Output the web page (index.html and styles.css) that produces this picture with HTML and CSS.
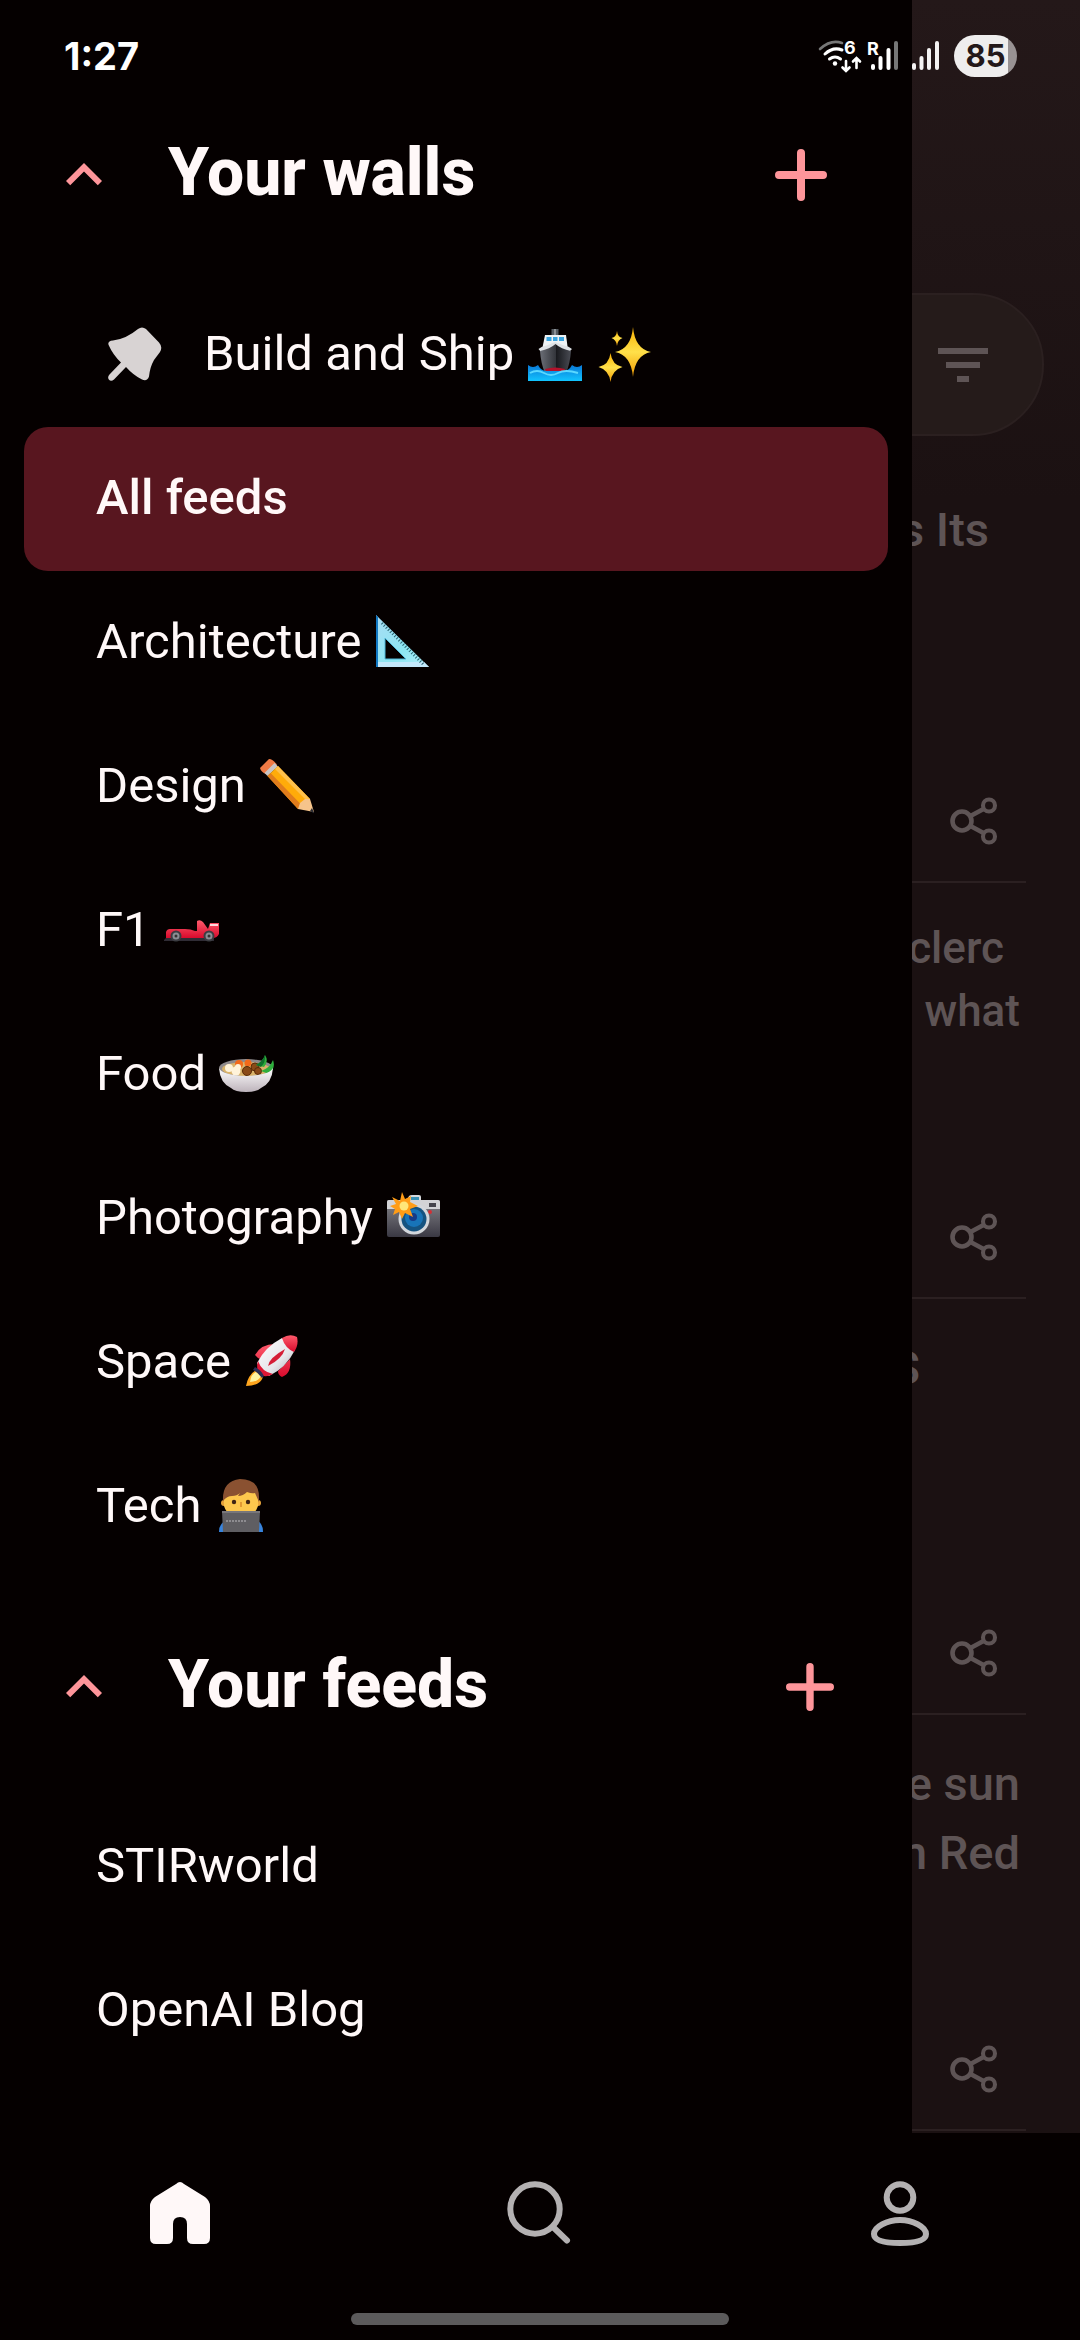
FILE: index.html
```html
<!DOCTYPE html>
<html lang="en">
<head>
<meta charset="utf-8">
<meta name="viewport" content="width=device-width, initial-scale=1">
<title>Your walls</title>
<link rel="stylesheet" href="styles.css">
</head>
<body>
<svg class="defs" aria-hidden="true">
  <defs>
    <linearGradient id="gold" x1="0" y1="0" x2="0" y2="1"><stop offset="0" stop-color="#f9b000"/><stop offset=".5" stop-color="#ffe04a"/><stop offset="1" stop-color="#f29a00"/></linearGradient>
    <linearGradient id="steel" x1="0" y1="0" x2="1" y2="0"><stop offset="0" stop-color="#6b6e76"/><stop offset=".5" stop-color="#34363c"/><stop offset=".51" stop-color="#17181c"/><stop offset="1" stop-color="#4a4c54"/></linearGradient>
    <linearGradient id="sea" x1="0" y1="0" x2="0" y2="1"><stop offset="0" stop-color="#0a78d6"/><stop offset="1" stop-color="#12c4ff"/></linearGradient>
    <linearGradient id="glass" x1="0" y1="0" x2="1" y2="1"><stop offset="0" stop-color="#a9dcf4"/><stop offset=".6" stop-color="#8ce6f2"/><stop offset="1" stop-color="#b4ecf8"/></linearGradient>
    <linearGradient id="body" x1="0" y1="0" x2="0" y2="1"><stop offset="0" stop-color="#85858a"/><stop offset="1" stop-color="#3a3843"/></linearGradient>
    <linearGradient id="bowl" x1="0" y1="0" x2="0" y2="1"><stop offset="0" stop-color="#fff"/><stop offset="1" stop-color="#bdb3bb"/></linearGradient>
    <linearGradient id="hull" x1="0" y1="0" x2="1" y2="1"><stop offset="0" stop-color="#fff"/><stop offset=".6" stop-color="#e6e6ea"/><stop offset="1" stop-color="#a9a9b0"/></linearGradient>
    <linearGradient id="red" x1="0" y1="0" x2="0" y2="1"><stop offset="0" stop-color="#ff5b6c"/><stop offset="1" stop-color="#d80a2c"/></linearGradient>
    <symbol id="chevron" viewBox="0 0 24 24"><path d="M12 8l-6 6 1.41 1.41L12 10.83l4.59 4.58L18 14z" fill="currentColor"/></symbol>
    <symbol id="plus" viewBox="0 0 52 52"><path d="M26 4v44M4 26h44" stroke="currentColor" stroke-width="8" stroke-linecap="round"/></symbol>
    <symbol id="share" viewBox="0 0 48 48"><g fill="none" stroke="currentColor"><circle cx="12" cy="24" r="9.5" stroke-width="4.6"/><circle cx="39" cy="8.5" r="6" stroke-width="4.1"/><circle cx="39" cy="39.5" r="6" stroke-width="4.1"/><path d="M20.5 19l13-7M20.5 29l13 7" stroke-width="4.6"/></g></symbol>
  </defs>
</svg>

<div class="app">
  <header class="status">
    <span class="clock">1:27</span>
    <div class="signals">
      <svg class="network" viewBox="818 35 122 42" aria-label="Wi-Fi 6, roaming signal, full signal">
        <g fill="none" stroke="#fff" stroke-width="3" stroke-linecap="round">
          <path d="M820 49q11-10 22-6" stroke="#777" stroke-width="2.6"/>
          <path d="M825 54q8-7.500 17-4"/><path d="M829.500 59q5.500-4 11 0"/>
          <path d="M846 61v9M842.500 67.500l3.500 3.500 3.500-3.500M856.500 68v-9M853 61.500l3.500-3.500 3.500 3.500" stroke-width="2.600"/>
        </g>
        <circle cx="835" cy="63.500" r="2.200" fill="#fff"/>
        <text class="tiny" x="844" y="54">6</text>
        <text class="tiny" x="867" y="55">R</text>
        <g fill="none" stroke="#fff" stroke-width="4" stroke-linecap="round">
          <path d="M873 66v2M880.500 58v10M888.500 50v18"/><path d="M896 43v25" stroke="#777"/>
          <path d="M914 65v3M921.500 58v10M929 50v18M937 43v25" stroke="#f4f3f3"/>
        </g>
      </svg>
      <span class="battery">85</span>
    </div>
  </header>

  <aside class="drawer">
    <section>
      <header class="section-head">
        <button class="icon-btn toggle" aria-label="Collapse walls"><svg class="chevron"><use href="#chevron"/></svg></button>
        <h2>Your walls</h2>
        <button class="icon-btn add" aria-label="Add wall"><svg class="plus"><use href="#plus"/></svg></button>
      </header>
      <nav class="list">
        <a href="#build" class="row pinned">
          <svg class="pin" viewBox="0 0 54 54" aria-hidden="true"><path d="M30 2Q34-1 38 2L51 15.500Q55 20 52 25L46 33Q42 40 41 49.500Q39 55 34 52.500Q25 48 18 40L6 52.500Q3 55 .8 52.500Q-.8 50 1.500 47.500L13 35.500Q5 28 .6 18Q-.8 14 5 13.500Q18 12 30 2Z" fill="#d8d3d3"/></svg>
          <span>Build and Ship</span>
          <svg class="emoji" viewBox="0 0 56 56" role="img" aria-label="ship">
            <path d="M25.500 3h7v7h-7z" fill="#555a60"/><path d="M28 3h2v7h-2z" fill="#8c9095"/>
            <path d="M19 9h21l2 15H16z" fill="#eef2f4"/><path d="M20.500 11h5v4h-5zM27 11h4.500v4H27zM33 11h5v4h-5z" fill="#3aa4df"/>
            <path d="M12.500 23q3-3 8-3.500L29 16l9 3.500q5 .5 8 3.500l-3 3H15z" fill="#dde1e5"/>
            <path d="M14 25q10-2 15.500-7Q35 23 45 25q-1 13-5 22H19q-4-9-5-22z" fill="url(#steel)"/>
            <path d="M19 43q10-3 20 0l-2 5H21z" fill="#b4122b"/>
            <path d="M2 39q5 4 10 0 3 6 9 6h16q6 0 9-6 5 4 10 0v16H2z" fill="url(#sea)"/>
            <path d="M4 47q7-4 14 0t14 0 20 0" fill="none" stroke="#5ad8ff" stroke-width="2"/>
          </svg>
          <svg class="emoji" viewBox="0 0 56 56" role="img" aria-label="sparkles" fill="url(#gold)">
            <path d="M36 1q2 22 18 25-16 3-18 25-2-22-18-25Q34 23 36 1z"/>
            <path d="M13.500 27q1.500 12 12 14-10.500 3-12 15-1.500-12-12-15 10.500-2 12-14z"/>
            <path d="M20 5q.5 6 5.500 7-5 2-5.500 8-.5-6-5.500-8 5-1 5.500-7z"/>
          </svg>
        </a>
        <a href="#all" class="row active" aria-current="page"><span>All feeds</span></a>
        <a href="#architecture" class="row"><span>Architecture</span>
          <svg class="emoji" viewBox="0 0 56 56" role="img" aria-label="triangular ruler">
            <path d="M2 1l53 52H2zM11 24v21h21z" fill="url(#glass)" fill-rule="evenodd"/>
            <path d="M2 1l2 2v50H2z" fill="#1279c4"/><path d="M4 48h46l5 5H4z" fill="#c4e8fb"/><path d="M11 24v21h21z" fill="none" stroke="#4fb7d8" stroke-width="1"/>
            <path d="M8 9l42 42" stroke="#27606e" stroke-width="3" stroke-dasharray="1 2"/>
          </svg></a>
        <a href="#design" class="row"><span>Design</span>
          <svg class="emoji" viewBox="0 0 56 56" role="img" aria-label="pencil">
            <path d="M2 10l9-9q4 0 8 6L8 16q-5-2-6-6z" fill="#f07a45"/><path d="M6.500 15l10-10 3.500 3.500L9.500 18z" fill="#c9c4c4"/>
            <path d="M9.500 18L20 8l32 33-12 10z" fill="#ffab0a"/><path d="M9.500 18l3-3 32 33-4.500 3z" fill="#e07c1c"/><path d="M17 11l3-3 32 33-3 2z" fill="#ffc04b"/>
            <path d="M40 51l2-6 5-4 5 0 4 13z" fill="#f6c48b"/><path d="M52 53l2-3 2.500 5.500z" fill="#2c2c34"/>
          </svg></a>
        <a href="#f1" class="row"><span>F1</span>
          <svg class="emoji" viewBox="0 0 56 56" role="img" aria-label="racing car">
            <path d="M1 38l4-4 46 2v3H1z" fill="#302c35"/>
            <path d="M3 30q1-3 4-3h15q6 0 10 2h2V19q3-2 6 1l5 7q1-3 2-6h9v11q-2 4-6 4H30L3 36z" fill="url(#red)"/><path d="M47 22h8v2h-8z" fill="#ffd9dd"/>
            <g fill="#8b8d93" stroke="#3c3d42" stroke-width="2"><circle cx="13" cy="34" r="4.500"/><circle cx="46" cy="34" r="4.500"/></g><g fill="#333"><circle cx="13" cy="34" r="1.500"/><circle cx="46" cy="34" r="1.500"/></g>
          </svg></a>
        <a href="#food" class="row"><span>Food</span>
          <svg class="emoji" viewBox="0 0 56 56" role="img" aria-label="bowl with food">
            <ellipse cx="28" cy="22" rx="27" ry="9" fill="#8f8a8c"/><ellipse cx="28" cy="23" rx="24" ry="7" fill="#d9b36a"/>
            <g fill="#f26a1b"><circle cx="21" cy="18" r="4"/><circle cx="30" cy="17" r="3.500"/></g>
            <g fill="#fff3da"><circle cx="11" cy="22" r="4"/><circle cx="18" cy="25" r="4.500"/><circle cx="20" cy="21" r="3"/></g>
            <g fill="#8a4a17" stroke="#5a2b0a" stroke-width="1"><circle cx="29" cy="25" r="4.500"/><circle cx="37" cy="21" r="4"/><circle cx="40" cy="25" r="3.500"/></g>
            <path d="M38 19q7-4 9-10 4 6-1 12zM43 25q9-3 12-11 3 8-4 14z" fill="#2fae3c"/><path d="M38 19q7-4 9-10 1 7-4 12z" fill="#10702c"/>
            <path d="M1 22q3 7 27 8 24-1 27-8-1 15-12 20-4 4-15 4t-15-4Q2 37 1 22z" fill="url(#bowl)"/>
          </svg></a>
        <a href="#photography" class="row"><span>Photography</span>
          <svg class="emoji" viewBox="0 0 56 56" role="img" aria-label="camera with flash">
            <path d="M21 12l3-6q1-1 3-1h7q2 0 2 2v5z" fill="#d7d9dc"/><path d="M26 7h8v4h-8z" fill="#3990b5"/>
            <rect x="2" y="10" width="53" height="37" rx="2" fill="url(#body)"/><path d="M2 19v-7q0-2 2-2h49q2 0 2 2v7z" fill="#d2d3d6"/>
            <path d="M44 13h7v4h-7z" fill="#45454d"/><circle cx="45" cy="22" r="2" fill="#d42f35"/>
            <circle cx="29" cy="29" r="15.500" fill="#d3d7dc"/><circle cx="29" cy="29" r="12.500" fill="#155380"/><circle cx="29" cy="28" r="9" fill="#1874b8"/><circle cx="28" cy="27" r="4" fill="#173a87"/>
            <path d="M17 2l3 7 6-3-1 6 8 4-8 3 3 8-8-4-3 6-3-7-6 3 2-6-5-3 6-2-4-7 8 4z" fill="#ff9c16"/><circle cx="19" cy="16" r="4.500" fill="#ffe679"/>
          </svg></a>
        <a href="#space" class="row"><span>Space</span>
          <svg class="emoji" viewBox="0 0 56 56" role="img" aria-label="rocket">
            <path d="M3 52q2-11 10-16l7 7q-3 9-17 9z" fill="#ffa51e"/><path d="M7 48q1-8 6-10l5 4q-3 6-11 6z" fill="#fff3a0"/>
            <path d="M12 21q6-11 20-11L19 26q-4-1-7-5zM47 25q2 14-8 18-4-2-4-6z" fill="url(#red)"/>
            <path d="M14 29Q22 13 39 4l13 12Q43 34 26 42q-9-4-12-13z" fill="url(#hull)"/>
            <path d="M39 4q8-5 15-1 2 8-3 15-9-4-12-14z" fill="url(#red)"/><path d="M15 27q4 11 15 13-7 4-12 1-6-5-3-14z" fill="#df1736"/>
            <path d="M12 33q6 3 9 9l-2 2q-4-6-9-8z" fill="#2b2e56"/><path d="M25 32q1-8 17-17-3 10-17 17z" fill="#d51d36"/>
          </svg></a>
        <a href="#tech" class="row"><span>Tech</span>
          <svg class="emoji" viewBox="0 0 56 56" role="img" aria-label="technologist">
            <path d="M5 54q0-8 6-11h33q5 3 5 11z" fill="#3884dd"/>
            <circle cx="10" cy="25" r="3" fill="#e6a23a"/><circle cx="44" cy="25" r="3" fill="#e6a23a"/>
            <path d="M10 14h34v14q-4 12-17 12T10 28z" fill="#fdc74d"/>
            <path d="M9 23Q8 3 26 1q19 0 19 18v5l-4-9q-3 1-8-1-4 4-9 4l2-3q-3 3-8 3-5 0-9 5z" fill="#8a5131"/>
            <circle cx="20" cy="24" r="2.200" fill="#402414"/><circle cx="34" cy="24" r="2.200" fill="#402414"/><path d="M27 24v5" stroke="#d88a2b" stroke-width="1.500"/>
            <path d="M8 33h38l-1 21H9z" fill="#5f5e62"/><path d="M8 33h38v2H8z" fill="#77767a"/><path d="M12 43h21" stroke="#8d8c90" stroke-width="2" stroke-dasharray="2 1"/>
          </svg></a>
      </nav>
    </section>
    <section>
      <header class="section-head">
        <button class="icon-btn toggle" aria-label="Collapse feeds"><svg class="chevron"><use href="#chevron"/></svg></button>
        <h2>Your feeds</h2>
        <button class="icon-btn add compact" aria-label="Add feed"><svg class="plus"><use href="#plus"/></svg></button>
      </header>
      <nav class="list">
        <a href="#stirworld" class="row"><span>STIRworld</span></a>
        <a href="#openai" class="row"><span>OpenAI Blog</span></a>
      </nav>
    </section>
  </aside>

  <main class="feed">
    <div class="searchbar">
      <button class="icon-btn" aria-label="Filter"><svg class="filter" viewBox="0 0 50 34"><path d="M0 0h50v6H0zM8 14h34v6H8zM19 28h12v6H19z" fill="currentColor"/></svg></button>
    </div>
    <article class="card lead">
      <h3><span class="line end-m">s Its</span></h3>
      <button class="icon-btn" aria-label="Share"><svg class="share"><use href="#share"/></svg></button>
    </article>
    <article class="card small">
      <h3><span class="line end-s">clerc</span><span class="line">what</span></h3>
      <button class="icon-btn" aria-label="Share"><svg class="share"><use href="#share"/></svg></button>
    </article>
    <article class="card">
      <h3><span class="line end-l">S</span></h3>
      <button class="icon-btn" aria-label="Share"><svg class="share"><use href="#share"/></svg></button>
    </article>
    <article class="card">
      <h3><span class="line">e sun</span><span class="line">n Red</span></h3>
      <button class="icon-btn" aria-label="Share"><svg class="share"><use href="#share"/></svg></button>
    </article>
  </main>

  <footer class="bottom">
    <nav class="tabs">
      <button class="icon-btn current" aria-label="Home"><svg viewBox="0 0 72 72"><path d="M32 7Q36 3 40 7L61 20Q66 24 66 29V61Q66 67 60 67H49Q43 67 43 61V47Q43 40 36 40T29 47V61Q29 67 23 67H12Q6 67 6 61V29Q6 24 11 20Z" fill="currentColor"/></svg></button>
      <button class="icon-btn" aria-label="Search"><svg viewBox="0 0 72 72"><g fill="none" stroke="currentColor" stroke-width="6" stroke-linecap="round"><circle cx="31" cy="32" r="24.700"/><path d="M49 50l14 13.500"/></g></svg></button>
      <button class="icon-btn" aria-label="Profile"><svg viewBox="0 0 72 72"><g fill="none" stroke="currentColor" stroke-width="6"><circle cx="36" cy="20.500" r="13.300"/><path d="M36 43c13 0 26 7 26 14 0 6-8 9-26 9S10 63 10 57c0-7 13-14 26-14z"/></g></svg></button>
    </nav>
    <div class="handle"></div>
  </footer>
</div>
</body>
</html>
```

FILE: styles.css
```css
* { box-sizing: border-box; }

body {
  margin: 0;
  background: #050000;
  color: #fff8f8;
  font-family: Roboto, "Noto Sans", sans-serif;
}

.defs { position: absolute; width: 0; height: 0; }

h2, h3 { margin: 0; }

.icon-btn {
  display: flex;
  align-items: center;
  justify-content: center;
  padding: 0;
  border: 0;
  background: none;
  color: inherit;
}

/* Status bar shares the first row with the drawer and the feed */
.app {
  display: grid;
  grid-template-columns: minmax(0, 38fr) minmax(0, 7fr);
  grid-template-rows: 103px 1fr auto;
  min-height: 100vh;
}

.status {
  grid-area: 1 / 1 / 2 / 3;
  z-index: 1;
  display: flex;
  align-items: center;
  justify-content: space-between;
  padding: 9px 63px 0 64px;
}

.clock {
  color: #fff;
  font: 700 38px/44px Inter, sans-serif;
}

.signals { display: flex; gap: 14px; }
.network { width: 122px; height: 42px; }
.tiny { fill: #fff; font: 700 18px Inter, sans-serif; }

.battery {
  width: 63px;
  border-radius: 21px;
  background: linear-gradient(90deg, #eeeded 54px, #989293 54px);
  color: #231819;
  font: 700 31px/42px Inter, sans-serif;
  text-align: center;
}

/* Drawer */
.drawer {
  grid-area: 1 / 1 / 3 / 2;
  padding: 67px 24px 50px;
}

.section-head {
  display: flex;
  align-items: center;
  height: 144px;
  margin: 36px 0;
  padding: 0 48px 0 24px;
  color: #fe959a;
}

.section-head h2 {
  flex: 1;
  padding: 0 0 4px 48px;
  color: #fff8f8;
  font-size: 66px;
  line-height: 80px;
  font-weight: 800;
}

.chevron { width: 72px; height: 72px; }
.add { width: 78px; height: 96px; }
.add .plus { width: 52px; height: 52px; }
.add.compact { width: 60px; }
.add.compact .plus { width: 48px; height: 48px; }

.row {
  display: flex;
  align-items: center;
  gap: 12px;
  height: 144px;
  padding: 0 72px 2px;
  border-radius: 24px;
  color: inherit;
  font-size: 49px;
  line-height: 72px;
  text-decoration: none;
  white-space: nowrap;
}

.row.active { background: #58161f; font-weight: 500; }
.pin { width: 54px; height: 54px; margin: 0 30px 0 12px; }
.emoji { width: 56px; height: 56px; }
.emoji + .emoji { margin-left: 3px; }

/* Dimmed feed behind the drawer */
.feed {
  grid-area: 1 / 2 / 3 / 3;
  overflow: hidden;
  padding: 293px 54px 0 0;
  background: linear-gradient(#241819, #1b1112 500px);
  color: #5e5455;
}

.searchbar {
  display: flex;
  justify-content: flex-end;
  height: 143px;
  margin: 0 -18px 25px -72px;
  padding-right: 54px;
  border: 2px solid #2b2020;
  border-radius: 72px;
  background: #251b1a;
}

.filter { width: 50px; height: 34px; }

.card {
  display: flex;
  flex-direction: column;
  align-items: flex-end;
  justify-content: space-between;
  height: 416px;
  padding: 34px 0 36px;
  border-bottom: 2px solid #2b2021;
}

.card.lead { height: 422px; }

.card h3 {
  font-size: 47px;
  line-height: 69px;
  font-weight: 500;
}

.card.small h3 { font-size: 44px; line-height: 63px; }

.line {
  display: block;
  padding-right: 6px;
  text-align: right;
  white-space: nowrap;
}

.end-s { padding-right: 22px; }
.end-m { padding-right: 37px; }
.end-l { padding-right: 106px; }

.share { width: 48px; height: 48px; margin-right: 28px; }

/* Bottom bar */
.bottom { grid-area: 3 / 1 / 4 / 3; padding-bottom: 16px; }

.tabs {
  display: grid;
  grid-template-columns: repeat(3, 1fr);
  height: 160px;
  color: #b4b1b2;
}

.tabs svg { width: 72px; height: 72px; }
.tabs .current { color: #fff8f8; }

.handle {
  width: 35%;
  height: 12px;
  margin: 20px auto 0;
  border-radius: 6px;
  background: #5c5a5b;
}
```
